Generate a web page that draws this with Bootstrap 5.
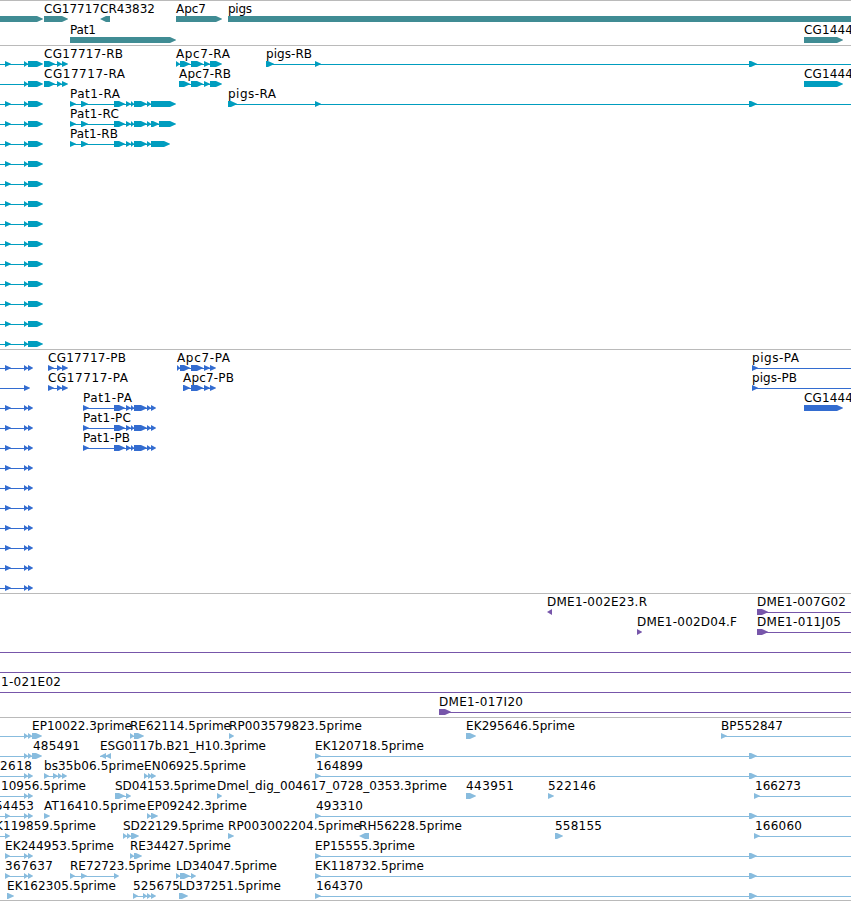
<!DOCTYPE html>
<html lang="en">
<head>
  <meta charset="UTF-8">
  <meta name="viewport" content="width=device-width, initial-scale=1">
  <title>Genome tracks</title>
  <link href="https://cdn.jsdelivr.net/npm/bootstrap@5.3.0/dist/css/bootstrap.min.css" rel="stylesheet">
  <style>
    .browser { border-bottom: 1px solid #bababa; }
    .track { border-top: 1px solid #bababa; }
    .track text { font: 12px "DejaVu Sans", sans-serif; fill: #000; }
    .gene { color: #408c94; }
    .transcript { color: #009dbf; }
    .protein { color: #336cd0; }
    .bac { color: #7756aa; }
    .est { color: #88bcde; }
  </style>
</head>
<body class="bg-white overflow-hidden">
  <main id="browser" class="browser d-flex flex-column"></main>

  <script src="https://cdn.jsdelivr.net/npm/bootstrap@5.3.0/dist/js/bootstrap.bundle.min.js"></script>
  <script>
    // feature: [label, label x, label width, exons, strand]
    // exons past either side keep the intron line running off the view
    const L = '-20:-10 ', R = ' 870:880';
    const left = ['', 0, 0, L + '5:11 24:28 28:43'];
    const leftP = ['', 0, 0, L + '5:11 24:28 28:33'];
    const pat = '114:125 126:131 131:134 134:147 147:151 ';
    const far = '315:321 749:757' + R;

    const tracks = [
      { cls: 'gene', height: 44, step: 21, rows: [
        [['', 0, 0, '-20:43'], ['CG17717', 44, 56, '44:68'], ['CR43832', 100, 55, '100:110', '-'],
         ['Apc7', 176, 30, '176:222'], ['pigs', 228, 24, '228:870']],
        [['Pat1', 70, 26, '70:176'], ['CG1444', 804, 49, '804:843']]
      ] },
      { cls: 'transcript', height: 303, step: 20, rows: [
        [left, ['CG17717-RB', 44, 79, '44:55 57:62 62:68'],
         ['Apc7-RA', 176, 54, '176:180 180:190 191:203 204:210 210:222'], ['pigs-RB', 266, 46, '266:274 ' + far]],
        [['', 0, 0, L + '24:28 28:43'], ['CG17717-RA', 44, 81, '44:55 57:62 62:68'],
         ['Apc7-RB', 179, 52, '179:190 191:203 204:210 210:222'], ['CG1444', 804, 49, '804:843']],
        [left, ['Pat1-RA', 70, 50, '70:76 81:88 ' + pat + '151:176'], ['pigs-RA', 228, 48, '228:237 ' + far]],
        [left, ['Pat1-RC', 70, 49, '70:76 81:88 ' + pat + '151:159 159:176']],
        [left, ['Pat1-RB', 70, 48, '70:76 81:88 ' + pat + '151:170']],
        ...Array(10).fill([left])
      ] },
      { cls: 'protein', height: 243, step: 20, rows: [
        [leftP, ['CG17717-PB', 48, 78, '48:54 57:62 62:68'],
         ['Apc7-PA', 177, 53, '177:180 180:190 191:203 204:210 210:216'], ['pigs-PA', 752, 47, '752:758' + R]],
        [['', 0, 0, L + '24:30'], ['CG17717-PA', 48, 80, '48:54 57:62 62:68'],
         ['Apc7-PB', 183, 51, '183:190 191:203 204:210 210:216'], ['pigs-PB', 752, 45, '752:758' + R]],
        [leftP, ['Pat1-PA', 83, 49, '83:89 ' + pat + '151:156'], ['CG1444', 804, 49, '804:843']],
        [leftP, ['Pat1-PC', 83, 48, '83:89 ' + pat + '151:156']],
        [leftP, ['Pat1-PB', 83, 47, '83:89 ' + pat + '151:156']],
        ...Array(7).fill([leftP])
      ] },
      { cls: 'bac', height: 123, step: 20, rows: [
        [['DME1-002E23.R', 547, 100, '547:552', '-'], ['DME1-007G02', 757, 89, '757:768' + R]],
        [['DME1-002D04.F', 637, 100, '637:642'], ['DME1-011J05', 757, 84, '757:768' + R]],
        [['', 0, 0, L + R]],
        [['', 0, 0, L + R]],
        [['1-021E02', 1, 60, L + R]],
        [['DME1-017I20', 439, 84, '439:451' + R]]
      ] },
      { cls: 'est', height: 182, step: 20, rows: [
        [['EP10022.3prime', 32, 100, L + '24:28 28:32 32:42'], ['RE62114.5prime', 130, 101, '130:134 134:144'],
         ['RP003579823.5prime', 229, 133, '229:234'], ['EK295646.5prime', 466, 109, '466:476'],
         ['BP552847', 721, 62, '721:727' + R]],
        [['485491', 33, 47, L + '24:28 28:32 32:42'], ['ESG0117b.B21_H10.3prime', 100, 166, '100:106 105:111', '-'],
         ['EK120718.5prime', 315, 109, far]],
        [['2618', 0, 32, L + '24:28 28:33'], ['bs35b06.5prime', 44, 100, '44:49 53:58 58:62 62:67'],
         ['EN06925.5prime', 144, 102, '144:148 148:152 151:156'], ['164899', 316, 47, far]],
        [['10956.5prime', 1, 85, L + '24:28 28:33'], ['SD04153.5prime', 115, 101, '115:125 126:131'],
         ['Dmel_dig_004617_0728_0353.3prime', 217, 230, '217:222'], ['443951', 466, 48, '466:476'],
         ['522146', 548, 48, '548:554'], ['166273', 755, 46, '754:760' + R]],
        [['54453', -5, 39, L + '5:10 24:28 28:33'], ['AT16410.5prime', 44, 102, '44:50'],
         ['EP09242.3prime', 147, 100, '147:151 151:158'], ['493310', 316, 47, far]],
        [['K119859.5prime', -5, 101, L + '5:10'], ['SD22129.5prime', 123, 101, '123:127 127:131 131:139'],
         ['RP003002204.5prime', 228, 133, '228:234'], ['RH56228.5prime', 359, 103, '359:369', '-'],
         ['558155', 555, 47, '555:563'], ['166060', 755, 47, '754:760' + R]],
        [['EK244953.5prime', 5, 109, '5:10 24:28 28:33'], ['RE34427.5prime', 130, 101, '130:134 134:142'],
         ['EP15555.3prime', 315, 100, far]],
        [['367637', 5, 48, '5:10 24:28 28:33'], ['RE72723.5prime', 70, 101, '70:75 81:87 114:119'],
         ['LD34047.5prime', 176, 101, '176:180 180:190 191:196'], ['EK118732.5prime', 315, 109, far]],
        [['EK162305.5prime', 7, 109, '7:14'], ['525675', 133, 47, '133:138 143:147 147:151 151:156'],
         ['LD37251.5prime', 179, 102, '179:188'], ['164370', 316, 47, far]]
      ] }
    ];

    function exonShape(a, b, y, strand) {
      const tip = Math.min(6, b - a);
      if (strand === '-') {
        return `<path d="M${b} ${y}H${a + tip}L${a} ${y + 3}L${a + tip} ${y + 6}H${b}Z"/>`;
      }
      return `<path d="M${a} ${y}H${b - tip}L${b} ${y + 2.7}V${y + 3.3}L${b - tip} ${y + 6}H${a}Z"/>`;
    }

    function drawTrack(track) {
      let shapes = '', labels = '';
      track.rows.forEach((row, i) => {
        const top = i * track.step;
        row.forEach(([name, x, width, spec, strand]) => {
          const exons = spec.trim().split(/\s+/).map(e => e.split(':').map(Number));
          if (exons.length > 1) {
            const start = exons[0][0], end = exons[exons.length - 1][1] - 2;
            shapes += `<rect x="${start}" y="${top + 18}" width="${end - start}" height="1"/>`;
          }
          exons.forEach(([a, b]) => shapes += exonShape(a, b, top + 15, strand));
          if (name) {
            labels += `<text x="${x}" y="${top + 12}" textLength="${width}">${name}</text>`;
          }
        });
      });
      return `<section class="track ${track.cls}">
        <svg class="d-block" width="851" height="${track.height}" fill="currentColor">${shapes}${labels}</svg>
      </section>`;
    }

    document.getElementById('browser').innerHTML = tracks.map(drawTrack).join('');
  </script>
</body>
</html>
